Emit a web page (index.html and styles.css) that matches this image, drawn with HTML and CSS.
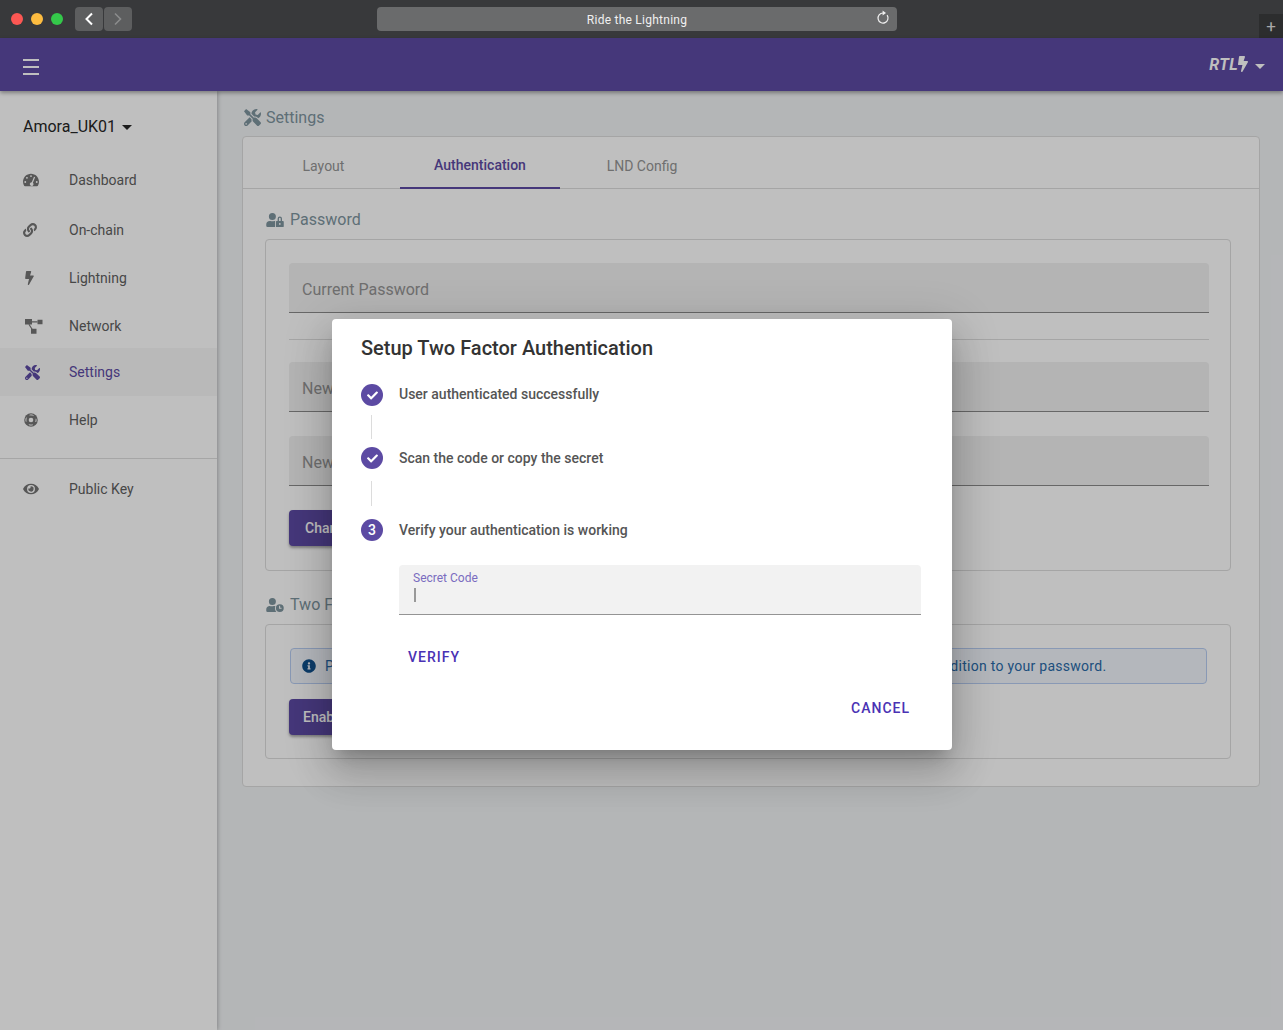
FILE: index.html
```html
<!DOCTYPE html>
<html lang="en">
<head>
    <meta charset="UTF-8">
    <title>Ride the Lightning</title>
    <link rel="stylesheet" href="styles.css">
</head>
<body>
    <svg class="defs" width="0" height="0">
        <symbol id="i-tools" viewBox="0 0 512 512"><path d="M501.1 395.7L384 278.6c-23.1-23.1-57.6-27.6-85.4-13.9L192 158.1V96L64 0 0 64l96 128h62.1l106.6 106.6c-13.6 27.8-9.2 62.3 13.9 85.4l117.1 117.1c14.6 14.6 38.2 14.6 52.7 0l52.7-52.7c14.5-14.6 14.5-38.2 0-52.7zM331.7 225c28.3 0 54.9 11 74.9 31l19.4 19.4c15.8-6.9 30.8-16.5 43.8-29.5 37.1-37.1 49.7-89.3 37.9-136.7-2.2-9-13.5-12.1-20.1-5.5l-74.4 74.4-67.9-11.3L334 98.9l74.4-74.4c6.6-6.6 3.4-17.9-5.7-20.2-47.4-11.7-99.6.9-136.6 37.9-28.5 28.5-41.9 66.1-41.2 103.6l82.1 82.1c8.1-1.9 16.5-2.9 24.7-2.9zm-103.9 82l-56.7-56.7L18.7 402.8c-25 25-25 65.5 0 90.5s65.5 25 90.5 0l123.6-123.6c-7.6-19.9-9.9-41.6-5-62.7zM64 472c-13.2 0-24-10.8-24-24 0-13.3 10.7-24 24-24s24 10.7 24 24c0 13.2-10.7 24-24 24z"/></symbol>
        <symbol id="i-bolt" viewBox="0 0 320 512"><path d="M296 160H180.6l42.6-129.8C227.2 15 215.7 0 200 0H56C44 0 33.8 8.9 32.2 20.8l-32 240C-2.7 275.2 8.5 288 24 288h118.7L96.6 482.5c-3.6 15.2 8 29.5 23.3 29.5 8.4 0 16.4-4.4 20.8-12l176-304c9.3-15.9-2.2-36-20.7-36z"/></symbol>
        <symbol id="i-check" viewBox="0 0 512 512"><path d="M173.898 439.404l-166.4-166.4c-9.997-9.997-9.997-26.206 0-36.204l36.203-36.204c9.997-9.998 26.207-9.998 36.204 0L192 312.69 432.095 72.596c9.997-9.997 26.207-9.997 36.204 0l36.203 36.204c9.997 9.997 9.997 26.206 0 36.204l-294.4 294.401c-9.998 9.997-26.207 9.997-36.204-.001z"/></symbol>
    </svg>

    <div class="titlebar">
        <div class="lights">
            <span class="light red"></span>
            <span class="light yellow"></span>
            <span class="light green"></span>
        </div>
        <div class="history">
            <span class="hist-btn">
                <svg width="10" height="14" viewBox="0 0 10 14"><path d="M8 1.5L2.5 7 8 12.5" fill="none" stroke="#fff" stroke-width="2"/></svg>
            </span>
            <span class="hist-btn">
                <svg width="10" height="14" viewBox="0 0 10 14"><path d="M2 1.5L7.5 7 2 12.5" fill="none" stroke="#8b8c8d" stroke-width="1.6"/></svg>
            </span>
        </div>
        <div class="address">
            <span>Ride the Lightning</span>
            <svg class="reload" width="14" height="15" viewBox="0 0 14 15"><path d="M11.1 5.1A5 5 0 1 1 7 3" fill="none" stroke="#f0f0f0" stroke-width="1.2"/><path d="M6.6.4L10 3 6.6 5.6z" fill="#f0f0f0"/></svg>
        </div>
        <span class="new-tab">+</span>
    </div>

    <div class="app">
        <header class="toolbar">
            <div class="burger"><span></span><span></span><span></span></div>
            <div class="logo">
                <span class="logo-text">RTL</span>
                <svg class="logo-bolt" width="10" height="16"><use href="#i-bolt"/></svg>
                <span class="caret"></span>
            </div>
        </header>

        <div class="layout">
            <aside class="sidebar">
                <div class="node-name">Amora_UK01 <span class="caret"></span></div>
                <nav class="nav">
                    <a class="nav-item">
                        <span class="nav-icon">
                            <svg width="16" height="16" viewBox="0 0 512 512"><path fill-rule="evenodd" d="M256 52C115 52 0 166 0 308c0 47 13 91 35 129 6 10 17 16 28 16h386c11 0 22-6 28-16 22-38 35-82 35-129C512 166 397 52 256 52zM256 100a30 30 0 1 1 0 60 30 30 0 0 1 0-60zM126 156a30 30 0 1 1 0 60 30 30 0 0 1 0-60zM72 290a30 30 0 1 1 0 60 30 30 0 0 1 0-60zM440 290a30 30 0 1 1 0 60 30 30 0 0 1 0-60zM352 150l36 14-72 178a60 60 0 1 1-36-14z"/></svg>
                        </span>
                        Dashboard
                    </a>
                    <a class="nav-item item-chain">
                        <span class="nav-icon">
                            <svg width="14" height="14" viewBox="0 0 512 512"><path d="M326.612 185.391c59.747 59.809 58.927 155.698.36 214.59-.11.12-.24.25-.36.37l-67.2 67.2c-59.27 59.27-155.699 59.262-214.96 0-59.27-59.26-59.27-155.7 0-214.96l37.106-37.106c9.84-9.84 26.786-3.3 27.294 10.606.648 17.722 3.826 35.527 9.69 52.721 1.986 5.822.567 12.262-3.783 16.612l-13.087 13.087c-28.026 28.026-28.905 73.66-1.155 101.96 28.024 28.579 74.086 28.749 102.325.51l67.2-67.19c28.191-28.191 28.073-73.757 0-101.83-3.701-3.694-7.429-6.564-10.341-8.569a16.037 16.037 0 0 1-6.947-12.606c-.396-10.567 3.348-21.456 11.698-29.806l21.054-21.055c5.521-5.521 14.182-6.199 20.584-1.731a152.482 152.482 0 0 1 20.522 17.197zM467.547 44.449c-59.261-59.262-155.69-59.27-214.96 0l-67.2 67.2c-.12.12-.25.25-.36.37-58.566 58.892-59.387 154.781.36 214.59a152.454 152.454 0 0 0 20.521 17.196c6.402 4.468 15.064 3.789 20.584-1.731l21.054-21.055c8.35-8.35 12.094-19.239 11.698-29.806a16.037 16.037 0 0 0-6.947-12.606c-2.912-2.005-6.64-4.875-10.341-8.569-28.073-28.073-28.191-73.639 0-101.83l67.2-67.19c28.239-28.239 74.3-28.069 102.325.51 27.75 28.3 26.872 73.934-1.155 101.96l-13.087 13.087c-4.35 4.35-5.769 10.79-3.783 16.612 5.864 17.194 9.042 34.999 9.69 52.721.509 13.906 17.454 20.446 27.294 10.606l37.106-37.106c59.271-59.259 59.271-155.699.001-214.959z"/></svg>
                        </span>
                        On-chain
                    </a>
                    <a class="nav-item">
                        <span class="nav-icon icon-left"><svg width="9" height="14"><use href="#i-bolt"/></svg></span>
                        Lightning
                    </a>
                    <a class="nav-item">
                        <span class="nav-icon icon-left">
                            <svg width="18" height="15" viewBox="0 0 18 15"><path d="M0 0h7v5.5H0zM12.5 0.8h5v4.4h-5zM6 9.8h5.5v5H6z"/><path d="M7 2.2h5.5v1.2H7zM3.4 5.5l1-.6 3.2 5-1 .6z"/></svg>
                        </span>
                        Network
                    </a>
                    <a class="nav-item active">
                        <span class="nav-icon"><svg width="15" height="15"><use href="#i-tools"/></svg></span>
                        Settings
                    </a>
                    <a class="nav-item">
                        <span class="nav-icon">
                            <svg class="icon-help" width="14" height="14" viewBox="0 0 512 512"><circle cx="256" cy="256" r="248"/><circle cx="256" cy="256" r="84" fill="#fff"/><circle cx="256" cy="256" r="186" fill="none" stroke="#fff" stroke-width="36" stroke-dasharray="150 142.2" stroke-dashoffset="75"/></svg>
                        </span>
                        Help
                    </a>
                </nav>
                <hr class="nav-rule">
                <a class="nav-item">
                    <span class="nav-icon">
                        <svg width="16" height="14" viewBox="0 0 576 512"><path d="M572.52 241.4C518.29 135.59 410.93 64 288 64S57.68 135.64 3.48 241.41a32.35 32.35 0 0 0 0 29.19C57.71 376.41 165.07 448 288 448s230.32-71.64 284.52-177.41a32.35 32.35 0 0 0 0-29.19zM288 400a144 144 0 1 1 144-144 143.93 143.93 0 0 1-144 144zm0-240a95.31 95.31 0 0 0-25.31 3.79 47.85 47.85 0 0 1-66.9 66.9A95.78 95.78 0 1 0 288 160z"/></svg>
                    </span>
                    Public Key
                </a>
            </aside>

            <main class="main">
                <h1 class="page-title"><svg width="17" height="17"><use href="#i-tools"/></svg>Settings</h1>
                <div class="card">
                    <div class="tabs">
                        <span class="tab tab-layout">Layout</span>
                        <span class="tab tab-auth">Authentication</span>
                        <span class="tab tab-lnd">LND Config</span>
                    </div>

                    <h2 class="sec-title">
                        <svg width="18" height="14" viewBox="0 0 640 512"><path d="M224 256A128 128 0 1 0 96 128a128 128 0 0 0 128 128zm96 64a63.08 63.08 0 0 1 8.1-30.5c-4.8-.5-9.5-1.5-14.5-1.5h-16.7a174.08 174.08 0 0 1-145.8 0h-16.7A134.43 134.43 0 0 0 0 422.4V464a48 48 0 0 0 48 48h280.9a63.54 63.54 0 0 1-8.9-32zm288-32h-32v-80a80 80 0 0 0-160 0v80h-32a32 32 0 0 0-32 32v160a32 32 0 0 0 32 32h224a32 32 0 0 0 32-32V320a32 32 0 0 0-32-32zM496 432a32 32 0 1 1 32-32 32 32 0 0 1-32 32zm32-144h-64v-80a32 32 0 0 1 64 0z"/></svg>
                        Password
                    </h2>
                    <div class="box">
                        <div class="field">Current Password</div>
                        <hr class="box-rule">
                        <div class="field">New Password</div>
                        <div class="field field-next">New Password Confirmation</div>
                        <button class="raised pw-btn">Change Password</button>
                    </div>

                    <h2 class="sec-title sec-two">
                        <svg width="18" height="14" viewBox="0 0 640 512"><path d="M224 256A128 128 0 1 0 96 128a128 128 0 0 0 128 128zm96 112c0-24 5-47 14-68-14-8-30-12-46-12h-17a174 174 0 0 1-146 0h-17A134 134 0 0 0 0 422v42a48 48 0 0 0 48 48h322c-31-33-50-76-50-144z"/><path fill-rule="evenodd" d="M496 224a144 144 0 1 0 0 288 144 144 0 0 0 0-288zm64 172h-92v-110h40v70h52z"/></svg>
                        Two Factor Authentication
                    </h2>
                    <div class="box box-two">
                        <div class="alert">
                            <svg width="14" height="14" viewBox="0 0 512 512"><path d="M256 8C119.043 8 8 119.083 8 256c0 136.997 111.043 248 248 248s248-111.003 248-248C504 119.083 392.957 8 256 8zm0 110c23.196 0 42 18.804 42 42s-18.804 42-42 42-42-18.804-42-42 18.804-42 42-42zm56 254c0 6.627-5.373 12-12 12h-88c-6.627 0-12-5.373-12-12v-24c0-6.627 5.373-12 12-12h12v-64h-12c-6.627 0-12-5.373-12-12v-24c0-6.627 5.373-12 12-12h64c6.627 0 12 5.373 12 12v100h12c6.627 0 12 5.373 12 12v24z"/></svg>
                            <span>Protect your account from unauthorized access by using two factor authentication for login in addition to your password.</span>
                        </div>
                        <button class="raised">Enable 2FA</button>
                    </div>
                </div>
            </main>
        </div>

        <div class="backdrop"></div>

        <div class="modal">
            <h3 class="modal-title">Setup Two Factor Authentication</h3>
            <div class="step step-first">
                <span class="step-dot"><svg width="11" height="11"><use href="#i-check"/></svg></span>
                <span class="step-text">User authenticated successfully</span>
            </div>
            <div class="step-line line-a"></div>
            <div class="step">
                <span class="step-dot"><svg width="11" height="11"><use href="#i-check"/></svg></span>
                <span>Scan the code or copy the secret</span>
            </div>
            <div class="step-line line-b"></div>
            <div class="step">
                <span class="step-dot">3</span>
                <span>Verify your authentication is working</span>
            </div>
            <div class="code-field">
                <label class="code-label">Secret Code</label>
                <span class="code-caret"></span>
            </div>
            <button class="text-btn verify-btn">VERIFY</button>
            <div class="modal-actions">
                <button class="text-btn">CANCEL</button>
            </div>
        </div>
    </div>
</body>
</html>
```

FILE: styles.css
```css
* {
    box-sizing: border-box;
}

html, body {
    margin: 0;
    height: 100%;
}

body {
    display: flex;
    flex-direction: column;
    height: 1030px;
    overflow: hidden;
    font-family: Roboto, "Liberation Sans", sans-serif;
    background-color: #38393b;
}

.defs {
    position: absolute;
}

svg {
    fill: currentColor;
    display: block;
}

/* title bar */
.titlebar {
    height: 38px;
    flex: none;
    display: flex;
    align-items: flex-start;
    position: relative;
    background-color: #38393b;
}

.lights {
    display: flex;
    gap: 8px;
    margin: 13px 0 0 11px;
}

.light {
    width: 12px;
    height: 12px;
    border-radius: 50%;
}

.red { background-color: #fc5753; }
.yellow { background-color: #fdbc40; }
.green { background-color: #34c84a; }

.history {
    display: flex;
    gap: 1px;
    margin: 7px 0 0 12px;
}

.hist-btn {
    width: 28px;
    height: 24px;
    border-radius: 4px;
    background-color: #5d5e5f;
    display: flex;
    align-items: center;
    justify-content: center;
}

.address {
    width: 520px;
    height: 24px;
    margin: 7px 0 0 245px;
    padding-top: 1px;
    border-radius: 4px;
    background-color: #6a6b6c;
    color: #f0f0f0;
    font-size: 12px;
    letter-spacing: 0.25px;
    display: flex;
    align-items: center;
    justify-content: center;
    position: relative;
}

.reload {
    position: absolute;
    right: 7px;
    top: 3px;
}

.new-tab {
    position: absolute;
    right: 0;
    bottom: 0;
    width: 24px;
    height: 24px;
    background-color: #2c2d2e;
    color: #a8a8a8;
    font-size: 17px;
    line-height: 25px;
    text-align: center;
}

/* app */
.app {
    flex: 1;
    display: flex;
    flex-direction: column;
    position: relative;
    min-height: 0;
    background-color: #f1f3f5;
}

.toolbar {
    height: 53px;
    flex: none;
    display: flex;
    align-items: center;
    justify-content: space-between;
    padding: 0 18px 0 23px;
    background-color: #5c4aa3;
    box-shadow: 0 2px 4px rgba(0,0,0,0.35);
    position: relative;
    z-index: 2;
}

.burger {
    width: 16px;
    margin-top: 5px;
    display: flex;
    flex-direction: column;
    gap: 5px;
}

.burger span {
    height: 2px;
    background-color: #fff;
}

.logo {
    display: flex;
    align-items: center;
    color: #fff;
    margin-top: 0;
}

.logo-text {
    font-size: 16px;
    font-weight: 700;
    font-style: italic;
    letter-spacing: 0.4px;
}

.logo-bolt {
    margin-top: -2px;
}

.caret {
    display: inline-block;
    width: 0;
    height: 0;
    border-left: 5px solid transparent;
    border-right: 5px solid transparent;
    border-top: 5px solid currentColor;
}

.logo .caret {
    margin: 4px 0 0 7px;
}

.layout {
    flex: 1;
    display: flex;
    min-height: 0;
}

/* sidebar */
.sidebar {
    width: 217px;
    flex: none;
    background-color: #fff;
    box-shadow: 1px 0 4px rgba(0,0,0,0.25);
    position: relative;
    z-index: 1;
}

.node-name {
    height: 65px;
    padding: 26px 0 0 23px;
    font-size: 16px;
    line-height: 19px;
    color: #262626;
}

.node-name .caret {
    margin: 0 0 2px 2px;
}

.nav-item {
    display: flex;
    align-items: center;
    height: 48px;
    padding-left: 23px;
    font-size: 14px;
    color: #5f5f5f;
}

.item-chain {
    margin-top: 2px;
}

.nav-icon {
    width: 46px;
    flex: none;
    color: #757575;
}

.icon-left svg {
    margin-left: 2px;
}

.icon-help {
    margin-left: 1px;
}

.active {
    margin-top: -2px;
    background-color: #f7f7f7;
    color: #5c4aa3;
}

.active .nav-icon {
    color: #5c4aa3;
}

.active .nav-icon svg {
    margin-left: 2px;
}

.nav-rule {
    margin: 14px 0 6px;
    border: none;
    border-top: 1px solid #dedede;
}

/* main content */
.main {
    flex: 1;
    min-width: 0;
    padding: 17px 23px 0 25px;
}

.page-title {
    display: flex;
    align-items: center;
    gap: 5px;
    height: 19px;
    margin: 0 0 9px 2px;
    font-size: 16px;
    font-weight: 400;
    color: #7e949e;
}

.card {
    height: 651px;
    border: 1px solid #dcdcdc;
    border-radius: 4px;
    background-color: #fff;
}

.tabs {
    display: flex;
    height: 52px;
    border-bottom: 1px solid #dcdcdc;
}

.tab {
    height: 52px;
    padding-top: 6px;
    display: flex;
    align-items: center;
    justify-content: center;
    font-size: 14px;
    color: #949494;
}

.tab-layout {
    width: 157px;
    padding-left: 4px;
}

.tab-auth {
    width: 160px;
    padding-top: 7px;
    padding-bottom: 2px;
    font-weight: 500;
    color: #5c4aa3;
    border-bottom: 2px solid #5c4aa3;
}

.tab-lnd {
    width: 164px;
}

.sec-title {
    display: flex;
    align-items: center;
    gap: 6px;
    height: 19px;
    margin: 21px 0 10px 23px;
    font-size: 16px;
    font-weight: 400;
    color: #7e949e;
}

.sec-two {
    margin-top: 24px;
}

.box {
    height: 332px;
    margin: 0 28px 0 22px;
    padding: 23px 21px 0 23px;
    border: 1px solid #dcdcdc;
    border-radius: 4px;
}

.box-two {
    height: 135px;
}

.field {
    height: 50px;
    padding: 17px 13px 0;
    font-size: 16px;
    line-height: 19px;
    color: #949494;
    background-color: #f0f0f0;
    border-bottom: 1px solid #8a8a8a;
    border-radius: 4px 4px 0 0;
}

.field-next {
    margin-top: 24px;
}

.box-rule {
    margin: 26px 0 22px;
    border: none;
    border-top: 1px solid #dcdcdc;
}

.raised {
    display: block;
    height: 36px;
    padding: 0 14px;
    border: none;
    border-radius: 4px;
    background-color: #5c4aa3;
    color: #fff;
    font-family: inherit;
    font-size: 14px;
    font-weight: 500;
    box-shadow: 0 2px 3px rgba(0,0,0,0.35);
}

.pw-btn {
    margin-top: 24px;
    padding: 0 16px;
}

.alert {
    display: flex;
    align-items: center;
    gap: 9px;
    height: 36px;
    margin: 0 2px 15px 1px;
    padding-left: 11px;
    border: 1px solid #b7ccf2;
    border-radius: 4px;
    background-color: #f1f5fb;
    color: #2a6aa8;
    font-size: 14px;
    letter-spacing: 0.275px;
    white-space: nowrap;
}

.alert svg {
    color: #10508c;
}

/* dialog */
.backdrop {
    position: absolute;
    inset: 0;
    z-index: 5;
    background-color: rgba(0,0,0,0.25);
}

.modal {
    position: absolute;
    left: 332px;
    top: 281px;
    width: 620px;
    height: 431px;
    z-index: 6;
    padding: 15px 0 0 29px;
    border-radius: 4px;
    background-color: #fff;
    box-shadow: 0 11px 15px -7px rgba(0,0,0,0.2), 0 24px 38px 3px rgba(0,0,0,0.14), 0 9px 46px 8px rgba(0,0,0,0.12);
}

.modal-title {
    margin: 0;
    font-size: 20px;
    line-height: 28px;
    font-weight: 500;
    color: #333;
}

.step {
    display: flex;
    align-items: center;
    gap: 16px;
    height: 22px;
    font-size: 14px;
    font-weight: 500;
    color: #555;
}

.step-first {
    margin-top: 22px;
}

.step-text {
    margin-top: -2px;
}

.step-dot {
    width: 22px;
    height: 22px;
    flex: none;
    display: flex;
    align-items: center;
    justify-content: center;
    border-radius: 50%;
    background-color: #5c4aa3;
    color: #fff;
    font-size: 14px;
}

.step-line {
    width: 1px;
    margin-left: 10px;
    background-color: #dcdcdc;
}

.line-a {
    height: 24px;
    margin-top: 9px;
    margin-bottom: 8px;
}

.line-b {
    height: 25px;
    margin-top: 12px;
    margin-bottom: 13px;
}

.code-field {
    position: relative;
    width: 522px;
    height: 50px;
    margin: 24px 0 0 38px;
    background-color: #f2f2f2;
    border-bottom: 1px solid #949494;
    border-radius: 4px 4px 0 0;
}

.code-label {
    position: absolute;
    left: 14px;
    top: 6px;
    font-size: 12px;
    line-height: 14px;
    color: #7a6cc0;
}

.code-caret {
    position: absolute;
    left: 15px;
    top: 23px;
    width: 2px;
    height: 14px;
    background-color: #999;
}

.text-btn {
    height: 36px;
    padding: 0;
    border: none;
    background: none;
    font-family: inherit;
    font-size: 14px;
    font-weight: 500;
    letter-spacing: 1px;
    color: #4a32b4;
}

.verify-btn {
    display: block;
    margin: 24px 0 0 47px;
}

.modal-actions {
    display: flex;
    justify-content: flex-end;
    margin-top: 15px;
    padding-right: 42px;
}
```
